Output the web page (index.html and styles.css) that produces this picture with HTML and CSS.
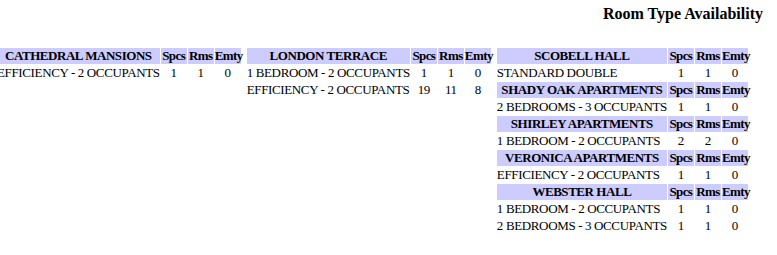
FILE: index.html
```html
<!DOCTYPE html>
<html>
<head>
<meta charset="utf-8">
<link rel="stylesheet" href="styles.css">
</head>
<body>
<div class="page">
  <h1 class="title">Room Type Availability</h1>
  <div class="columns">
    <table class="avail">
      <tr class="head"><th class="name">CATHEDRAL MANSIONS</th><th>Spcs</th><th>Rms</th><th>Emty</th></tr>
      <tr><td class="name">EFFICIENCY - 2 OCCUPANTS</td><td>1</td><td>1</td><td>0</td></tr>
    </table>
    <table class="avail">
      <tr class="head"><th class="name">LONDON TERRACE</th><th>Spcs</th><th>Rms</th><th>Emty</th></tr>
      <tr><td class="name">1 BEDROOM - 2 OCCUPANTS</td><td>1</td><td>1</td><td>0</td></tr>
      <tr><td class="name">EFFICIENCY - 2 OCCUPANTS</td><td>19</td><td>11</td><td>8</td></tr>
    </table>
    <table class="avail">
      <tr class="head"><th class="name">SCOBELL HALL</th><th>Spcs</th><th>Rms</th><th>Emty</th></tr>
      <tr><td class="name">STANDARD DOUBLE</td><td>1</td><td>1</td><td>0</td></tr>
      <tr class="head"><th class="name">SHADY OAK APARTMENTS</th><th>Spcs</th><th>Rms</th><th>Emty</th></tr>
      <tr><td class="name">2 BEDROOMS - 3 OCCUPANTS</td><td>1</td><td>1</td><td>0</td></tr>
      <tr class="head"><th class="name">SHIRLEY APARTMENTS</th><th>Spcs</th><th>Rms</th><th>Emty</th></tr>
      <tr><td class="name">1 BEDROOM - 2 OCCUPANTS</td><td>2</td><td>2</td><td>0</td></tr>
      <tr class="head"><th class="name">VERONICA APARTMENTS</th><th>Spcs</th><th>Rms</th><th>Emty</th></tr>
      <tr><td class="name">EFFICIENCY - 2 OCCUPANTS</td><td>1</td><td>1</td><td>0</td></tr>
      <tr class="head"><th class="name">WEBSTER HALL</th><th>Spcs</th><th>Rms</th><th>Emty</th></tr>
      <tr><td class="name">1 BEDROOM - 2 OCCUPANTS</td><td>1</td><td>1</td><td>0</td></tr>
      <tr><td class="name">2 BEDROOMS - 3 OCCUPANTS</td><td>1</td><td>1</td><td>0</td></tr>
    </table>
  </div>
</div>
</body>
</html>
```
FILE: styles.css
```css
html, body {
  margin: 0;
  padding: 0;
  background: #ffffff;
}
body {
  font-family: "Liberation Serif", "Times New Roman", serif;
  color: #000000;
}
.page {
  padding: 5px 14px 0 0;
}
.title {
  margin: 0;
  font-size: 16px;
  font-weight: bold;
  text-align: right;
  line-height: 18px;
}
.columns {
  display: flex;
  align-items: flex-start;
  gap: 4px;
  margin-top: 24px;
  margin-left: -4px;
}
.avail {
  border-collapse: separate;
  border-spacing: 1px;
  font-size: 13px;
  line-height: 16px;
  letter-spacing: -0.3px;
}
.avail th, .avail td {
  width: 26px;
  min-width: 26px;
  max-width: 26px;
  padding: 0;
  text-align: center;
  white-space: nowrap;
  overflow: visible;
}
.avail th.name, .avail td.name {
  width: auto;
  min-width: 0;
  max-width: none;
  padding: 0;
}
.avail th {
  background: #ccccff;
  font-weight: bold;
  letter-spacing: -0.6px;
}
.avail th.name {
  letter-spacing: -0.45px;
}
.avail td.name {
  text-align: left;
  letter-spacing: -0.36px;
}
```
